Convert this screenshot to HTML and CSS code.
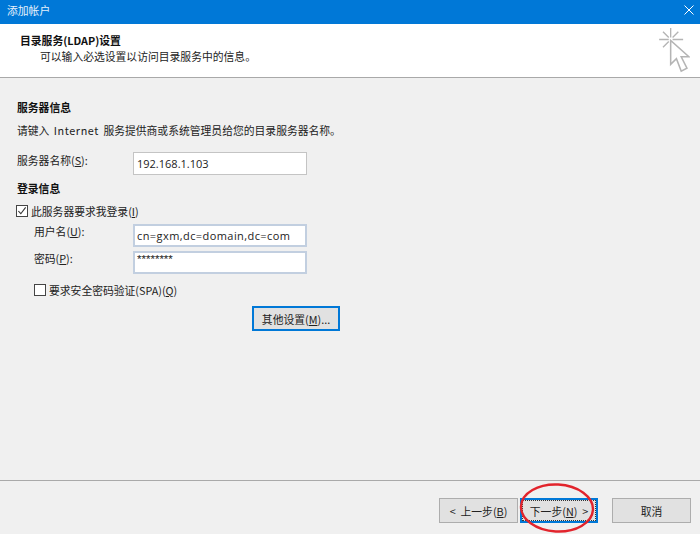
FILE: index.html
```html
<!DOCTYPE html>
<html lang="zh-CN">
<head>
    <meta charset="UTF-8">
    <title>添加帐户</title>
    <link rel="stylesheet" href="styles.css">
</head>
<body>
    <div class="dialog">
        <div class="titlebar">
            <span>添加帐户</span>
            <svg class="close" viewBox="0 0 10 10" fill="none" stroke="#fff" stroke-width="1">
                <path d="M0.5 0.5L9.5 9.5M9.5 0.5L0.5 9.5"></path>
            </svg>
        </div>

        <div class="header">
            <div class="header-text">
                <div class="header-title">目录服务(LDAP)设置</div>
                <div class="header-sub">可以输入必选设置以访问目录服务中的信息。</div>
            </div>
            <svg class="cursor-icon" viewBox="0 0 32 48" fill="none" stroke="#b4b4b4">
                <path d="M12 0V10M12 14V24M0 12H10M14 12H25M4 4L10 10M14 10L20 4M4 20L10 14" stroke-width="1.4"></path>
                <path d="M12 13V38L18 32L23 45L29 42L23 30L31 30Z" fill="#fff" stroke-width="1.6"></path>
            </svg>
        </div>

        <div class="content">
            <div class="section-title">服务器信息</div>
            <div class="hint">请键入 <span class="latin">Internet</span> 服务提供商或系统管理员给您的目录服务器名称。</div>
            <div class="row server-row">
                <label class="row-label">服务器名称(<u>S</u>):</label>
                <div class="input input-ip">192.168.1.103</div>
            </div>

            <div class="section-title login-title">登录信息</div>
            <div class="check-row login-check">
                <span class="check">
                    <svg viewBox="0 0 11 11" fill="none" stroke="#333" stroke-width="1.2"><path d="M1.5 5.5L4.2 8.5L9.5 1.5"></path></svg>
                </span>
                <span>此服务器要求我登录(<u>I</u>)</span>
            </div>
            <div class="login-fields">
                <div class="row">
                    <label class="row-label sub-label">用户名(<u>U</u>):</label>
                    <div class="input input-active">cn=gxm,dc=domain,dc=com</div>
                </div>
                <div class="row">
                    <label class="row-label sub-label">密码(<u>P</u>):</label>
                    <div class="input input-active input-pwd">********</div>
                </div>
                <div class="check-row spa-row">
                    <span class="check"></span>
                    <span>要求安全密码验证(SPA)(<u>Q</u>)</span>
                </div>
            </div>
            <div class="more-row">
                <button class="button button-focus more-button">其他设置(<u>M</u>)...</button>
            </div>
        </div>

        <div class="footer">
            <button class="button">&lt;&nbsp; 上一步(<u>B</u>)</button>
            <button class="button button-focus button-next">下一步(<u>N</u>)&nbsp; &gt;</button>
            <button class="button button-cancel">取消</button>
        </div>
    </div>

    <!-- red ring drawn over the screenshot -->
    <svg class="ring" viewBox="0 0 76 52" fill="none" stroke="#e2242c" stroke-width="2.4">
        <ellipse cx="38" cy="26" rx="36" ry="23.5" transform="rotate(3 38 26)"></ellipse>
    </svg>
</body>
</html>
```

FILE: styles.css
```css
* {
    box-sizing: border-box;
}

html, body {
    margin: 0;
    padding: 0;
}

body {
    width: 700px;
    height: 534px;
    overflow: hidden;
    position: relative;
    font-family: "Noto Sans CJK SC", "Liberation Sans", sans-serif;
    font-size: 10.8px;
    color: #222;
    background-color: #f0f0f0;
}

.dialog {
    height: 534px;
    display: flex;
    flex-direction: column;
}

.titlebar {
    height: 24px;
    flex-shrink: 0;
    display: flex;
    align-items: center;
    justify-content: space-between;
    padding: 0 6px 4px 7px;
    background-color: #0078d7;
    color: #e6f1fb;
}

.close {
    width: 10px;
    height: 10px;
}

.header {
    height: 54px;
    flex-shrink: 0;
    display: flex;
    justify-content: space-between;
    background: white;
    border-bottom: 1px solid #a9a9a9;
    padding: 8px 10px 0 20px;
}

.header-title {
    font-weight: bold;
    line-height: 17px;
    color: #111;
}

.header-sub {
    line-height: 15px;
    padding-left: 20px;
}

.cursor-icon {
    width: 31px;
    height: 46px;
    margin-top: -4px;
}

.content {
    flex: 1;
    padding: 21px 0 0 17px;
}

.section-title {
    font-weight: bold;
    line-height: 16px;
    color: #111;
}

.hint {
    line-height: 16px;
    margin-top: 7px;
    word-spacing: 2px;
}

.latin {
    letter-spacing: 0.6px;
}

.row {
    display: flex;
    align-items: flex-start;
    margin-bottom: 4px;
}

.server-row {
    margin-top: 14px;
    margin-bottom: 0;
}

.row-label {
    width: 116px;
    line-height: 16px;
}

.sub-label {
    width: 99px;
    line-height: 15px;
}

.input {
    width: 174px;
    height: 23px;
    background: white;
    border: 1px solid #c4c4c4;
    padding-left: 3px;
    line-height: 21px;
    font-family: "Open Sans", "Noto Sans CJK SC", sans-serif;
    font-size: 11px;
    letter-spacing: 0.42px;
    color: #222;
}

.input-ip {
    letter-spacing: 0;
}

.input-active {
    border: 2px solid #c2cfe0;
    padding-left: 2px;
    line-height: 19px;
}

.input-pwd {
    font-family: "Liberation Sans", sans-serif;
    font-size: 11.5px;
    letter-spacing: 0;
    line-height: 13px;
}

.login-title {
    margin-top: 5px;
}

.check-row {
    display: flex;
    align-items: center;
    gap: 3px;
    line-height: 16px;
}

.check {
    width: 12px;
    height: 12px;
    background: white;
    border: 1px solid #444;
}

.check svg {
    display: block;
    width: 10px;
    height: 10px;
}

.login-check {
    margin: 7px 0 5px -1px;
}

.login-fields {
    padding-left: 17px;
}

.spa-row {
    margin-top: 8px;
}

.more-row {
    padding-left: 235px;
    margin-top: 8px;
}

.button {
    width: 79px;
    height: 25px;
    padding: 0;
    background-color: #e1e1e1;
    border: 1px solid #adadad;
    font-family: "Noto Sans CJK SC", "Liberation Sans", sans-serif;
    font-size: 10.8px;
    color: #222;
}

.button-focus {
    border: 2px solid #0078d7;
}

.more-button {
    width: 88px;
}

.footer {
    height: 54px;
    flex-shrink: 0;
    display: flex;
    align-items: flex-start;
    border-top: 1px solid #a9a9a9;
    padding: 17px 0 0 439px;
}

.button-next {
    width: 78px;
    margin-left: 2px;
    outline: 1px dotted #333;
    outline-offset: -3px;
}

.button-cancel {
    margin-left: 14px;
}

.ring {
    position: absolute;
    left: 519px;
    top: 482px;
    width: 76px;
    height: 52px;
}
```
